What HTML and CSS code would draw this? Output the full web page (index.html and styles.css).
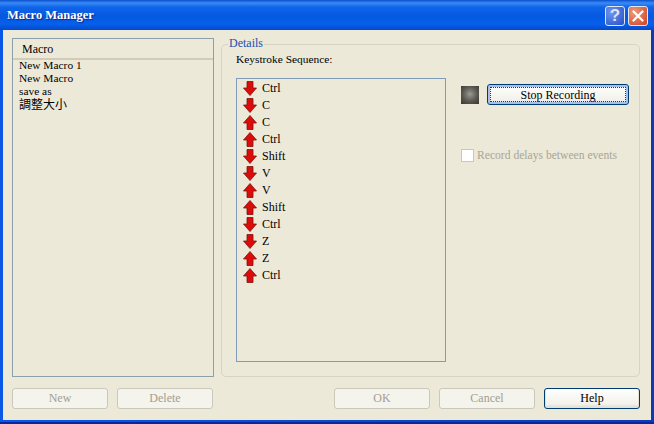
FILE: index.html
```html
<!DOCTYPE html>
<html lang="en">
<head>
  <meta charset="UTF-8">
  <title>Macro Manager</title>
  <link rel="stylesheet" href="styles.css">
</head>
<body>
  <svg class="defs" width="0" height="0">
    <symbol id="arrowDown" viewBox="0 0 15 15">
      <path d="M4 .5h6v6.500h3.500L7 14.500 .5 7H4z" fill="#dc0c0a" stroke="#7c1410" stroke-width=".8"/>
    </symbol>
    <symbol id="arrowUp" viewBox="0 0 15 15">
      <path d="M4 14.500h6V8h3.500L7 .5 .5 8H4z" fill="#dc0c0a" stroke="#7c1410" stroke-width=".8"/>
    </symbol>
  </svg>

  <div class="window">
    <div class="titlebar">
      <span class="title">Macro Manager</span>
      <div class="title-btns">
        <span class="title-btn help-btn">?</span>
        <span class="title-btn close-btn">
          <svg width="12" height="12" viewBox="0 0 12 12"><path d="M1.500 1.500l9 9M10.500 1.500l-9 9" stroke="#fff" stroke-width="2.200" stroke-linecap="round"/></svg>
        </span>
      </div>
    </div>

    <div class="content">
      <div class="main">
        <div class="macro-list">
          <div class="macro-head">Macro</div>
          <div class="macro-item">New Macro 1</div>
          <div class="macro-item">New Macro</div>
          <div class="macro-item">save as</div>
          <div class="macro-item cjk">調整大小</div>
        </div>

        <fieldset class="details">
          <legend>Details</legend>
          <div class="seq-label">Keystroke Sequence:</div>
          <div class="details-row">
            <div class="seq-list">
              <div class="seq-row"><svg class="arrow"><use href="#arrowDown"/></svg>Ctrl</div>
              <div class="seq-row"><svg class="arrow"><use href="#arrowDown"/></svg>C</div>
              <div class="seq-row"><svg class="arrow"><use href="#arrowUp"/></svg>C</div>
              <div class="seq-row"><svg class="arrow"><use href="#arrowUp"/></svg>Ctrl</div>
              <div class="seq-row"><svg class="arrow"><use href="#arrowDown"/></svg>Shift</div>
              <div class="seq-row"><svg class="arrow"><use href="#arrowDown"/></svg>V</div>
              <div class="seq-row"><svg class="arrow"><use href="#arrowUp"/></svg>V</div>
              <div class="seq-row"><svg class="arrow"><use href="#arrowUp"/></svg>Shift</div>
              <div class="seq-row"><svg class="arrow"><use href="#arrowDown"/></svg>Ctrl</div>
              <div class="seq-row"><svg class="arrow"><use href="#arrowDown"/></svg>Z</div>
              <div class="seq-row"><svg class="arrow"><use href="#arrowUp"/></svg>Z</div>
              <div class="seq-row"><svg class="arrow"><use href="#arrowUp"/></svg>Ctrl</div>
            </div>
            <div class="record-panel">
              <div class="record-row">
                <span class="record-led"></span>
                <button class="btn btn-focus btn-stop">Stop Recording</button>
              </div>
              <label class="check-row">
                <span class="checkbox"></span>
                Record delays between events
              </label>
            </div>
          </div>
        </fieldset>
      </div>

      <div class="footer">
        <div class="btn-group">
          <button class="btn btn-small" disabled>New</button>
          <button class="btn btn-small" disabled>Delete</button>
        </div>
        <div class="btn-group">
          <button class="btn" disabled>OK</button>
          <button class="btn" disabled>Cancel</button>
          <button class="btn btn-default">Help</button>
        </div>
      </div>
    </div>
  </div>
</body>
</html>
```

FILE: styles.css
```css
html, body {
  margin: 0;
  padding: 0;
}

body {
  font-family: "Liberation Serif", "Noto Sans CJK TC", serif;
  font-size: 12px;
  color: #000;
  background-color: #ece9d8;
}

.defs {
  position: absolute;
}

/* Window frame */
.window {
  width: 654px;
  height: 424px;
  display: flex;
  flex-direction: column;
  box-sizing: border-box;
  background: linear-gradient(to right, #0a58e6, #0a3cb8);
  border-bottom: 2px solid #08289a;
  overflow: hidden;
}

.titlebar {
  height: 30px;
  flex: none;
  display: flex;
  align-items: center;
  justify-content: space-between;
  padding: 1px 6px 0 7px;
  box-sizing: border-box;
  background: linear-gradient(to bottom, #0a4fd0 0, #3a8cf4 3px, #0f66ea 7px, #0558e0 16px, #0660ec 24px, #0448c8 30px);
}

.title {
  font-weight: bold;
  font-size: 12.500px;
  color: #fff;
  text-shadow: 1px 1px 1px #0a2a80;
}

.title-btns {
  display: flex;
  gap: 3px;
}

.title-btn {
  width: 20px;
  height: 20px;
  box-sizing: border-box;
  border: 1px solid #dfe8f8;
  border-radius: 3px;
  display: flex;
  align-items: center;
  justify-content: center;
  color: #fff;
}

.help-btn {
  font-family: "Liberation Sans", sans-serif;
  font-weight: bold;
  font-size: 17px;
  color: #dbe6fa;
  background: radial-gradient(circle at 30% 30%, #6f96ee, #2350c8);
}

.close-btn {
  background: radial-gradient(circle at 30% 30%, #ee9a7c, #d0401c);
}

/* Dialog body */
.content {
  flex: 1;
  display: flex;
  flex-direction: column;
  margin: 0 3px 2px 3px;
  padding: 8px 11px 11px 9px;
  background-color: #ece9d8;
}

.main {
  flex: 1;
  display: flex;
  gap: 7px;
  min-height: 0;
}

/* Macro list on the left */
.macro-list {
  width: 202px;
  flex: none;
  box-sizing: border-box;
  border: 1px solid #8ba0a8;
}

.macro-head {
  height: 19px;
  line-height: 20px;
  padding-left: 9px;
  border-bottom: 2px solid #d0ccb8;
}

.macro-item {
  height: 13px;
  line-height: 11px;
  padding-left: 6px;
  font-size: 11.400px;
  white-space: nowrap;
}

.macro-item.cjk {
  font-size: 12px;
  line-height: 13px;
}

/* Details group */
.details {
  flex: 1;
  min-width: 0;
  margin: 0;
  padding: 2px 0 0 14px;
  border: 1px solid #d8d4c4;
  border-radius: 5px;
}

.details legend {
  margin-left: -8px;
  padding: 0 1px;
  height: 12px;
  line-height: 11px;
  color: #1a4fb0;
}

.seq-label {
  height: 14px;
  line-height: 14px;
  font-size: 11.400px;
}

.details-row {
  display: flex;
  gap: 15px;
  margin-top: 12px;
}

.seq-list {
  width: 210px;
  height: 284px;
  box-sizing: border-box;
  border: 1px solid #7f9db9;
  padding: 1px 0 0 6px;
}

.seq-row {
  height: 17px;
  display: flex;
  align-items: center;
  gap: 4px;
}

.arrow {
  width: 15px;
  height: 15px;
  flex: none;
}

/* Recording controls */
.record-panel {
  padding-top: 6px;
}

.record-row {
  display: flex;
  align-items: center;
  gap: 8px;
}

.record-led {
  width: 18px;
  height: 18px;
  background: radial-gradient(circle at 50% 45%, #9a9a96 0, #5a5650 55%, #3a3630 100%);
}

.check-row {
  display: flex;
  align-items: center;
  gap: 3px;
  margin-top: 43px;
  height: 14px;
  font-size: 11.600px;
  color: #a8a596;
}

.checkbox {
  width: 11px;
  height: 11px;
  background-color: #fff;
  border: 1px solid #cac8bb;
}

/* Buttons */
.btn {
  width: 96px;
  height: 21px;
  padding: 0 0 1px;
  font-family: inherit;
  font-size: 12px;
  color: #000;
  background: linear-gradient(to bottom, #fff, #f2f1ea 80%, #dcd8c8);
  border: 1px solid #003c74;
  border-radius: 3px;
}

.btn:disabled {
  color: #a3a090;
  background: #f4f3ec;
  border-color: #cac8bb;
}

.btn-stop {
  width: 142px;
  padding: 1px 0 0;
  box-shadow: inset 0 0 0 2px #a8c0e8;
  outline: 1px dotted #333;
  outline-offset: -4px;
}

.btn-default {
  box-shadow: inset 0 -1px 0 1px #e4e2d8;
}

.footer {
  display: flex;
  justify-content: space-between;
  margin-top: 11px;
}

.btn-group {
  display: flex;
  gap: 9px;
}
```
